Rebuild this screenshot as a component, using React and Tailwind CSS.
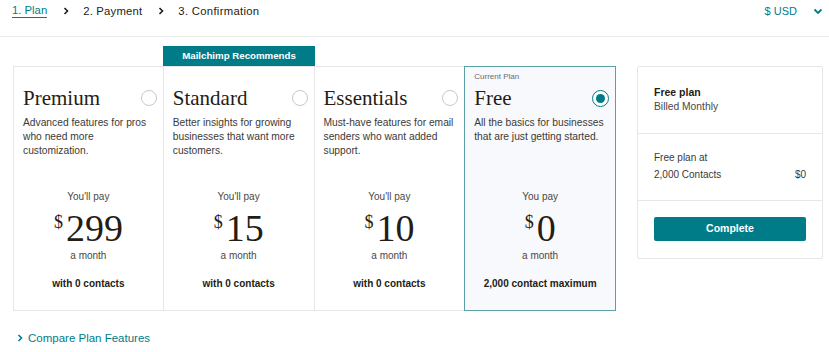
import React from "react";

const sans = { fontFamily: '"Liberation Sans", Arial, sans-serif' };
const serif = { fontFamily: '"Liberation Serif", "Times New Roman", serif' };

function Chevron({ className = "", color = "#241c15" }) {
  return (
    <svg width="6" height="8" viewBox="0 0 6 8" className={className}>
      <path d="M1.5 1 L4.5 4 L1.5 7" fill="none" stroke={color} strokeWidth="1.6" />
    </svg>
  );
}

function Radio({ selected }) {
  if (selected) {
    return (
      <div className="w-[17px] h-[17px] rounded-full border-[1.5px] border-[#007c89] bg-white flex items-center justify-center shrink-0">
        <div className="w-[9px] h-[9px] rounded-full bg-[#007c89]" />
      </div>
    );
  }
  return <div className="w-[16px] h-[16px] rounded-full border border-[#c8c8c8] bg-white shrink-0" />;
}

const plans = [
  {
    name: "Premium",
    desc: "Advanced features for pros who need more customization.",
    pay: "You'll pay",
    price: "299",
    contacts: "with 0 contacts",
  },
  {
    name: "Standard",
    desc: "Better insights for growing businesses that want more customers.",
    pay: "You'll pay",
    price: "15",
    contacts: "with 0 contacts",
  },
  {
    name: "Essentials",
    desc: "Must-have features for email senders who want added support.",
    pay: "You'll pay",
    price: "10",
    contacts: "with 0 contacts",
  },
  {
    name: "Free",
    desc: "All the basics for businesses that are just getting started.",
    pay: "You pay",
    price: "0",
    contacts: "2,000 contact maximum",
    current: true,
  },
];

function PlanCard({ plan, first }) {
  const base = plan.current
    ? "relative -ml-px border border-[#5b9fa7] bg-[#f8f9fd]"
    : "border-y border-r border-[#e6e6e6] bg-white" + (first ? " border-l" : "");
  return (
    <div className={"flex flex-col h-[245px] " + base}>
      <div className="h-[123px] pl-[9px] pr-[6px] pt-[5px] flex flex-col">
        <div className="h-[10px] text-[8px] leading-[10px] text-[#6b6b6b]" style={sans}>
          {plan.current ? "Current Plan" : ""}
        </div>
        <div className="mt-[4px] h-[24px] flex items-center justify-between">
          <span className="text-[21px] leading-[24px] text-[#241c15]" style={serif}>
            {plan.name}
          </span>
          <Radio selected={plan.current} />
        </div>
        <div className="mt-[6px] text-[10.25px] leading-[14px] text-[#3b3937] pr-[2px]" style={sans}>
          {plan.desc}
        </div>
      </div>
      <div className="flex flex-col items-center" style={sans}>
        <div className="text-[10px] leading-[14px] text-[#4a4745]">{plan.pay}</div>
        <div className="mt-[4px] h-[40px] flex items-start justify-center" style={serif}>
          <span className="mt-[4px] text-[18px] leading-[20px] text-[#241c15]">$</span>
          <span className="ml-[3px] text-[38px] leading-[40px] text-[#241c15]">{plan.price}</span>
        </div>
        <div className="mt-[1px] text-[10px] leading-[14px] text-[#4a4745]">a month</div>
        <div className="mt-[14px] text-[10px] leading-[14px] font-bold text-[#241c15]">
          {plan.contacts}
        </div>
      </div>
    </div>
  );
}

export default function App() {
  return (
    <div className="w-[829px] h-[352px] bg-white overflow-hidden text-[#241c15]" style={sans}>
      {/* Header */}
      <div className="h-[37px] border-b border-[#ebebeb] flex items-start justify-between pt-[4px] pl-[12px] pr-[6px]">
        <div className="flex items-center h-[14px] text-[11.3px] leading-[14px]">
          <span className="text-[#007c89] border-b border-[#007c89] leading-[13px]">1. Plan</span>
          <Chevron className="ml-[16px] mr-[14px]" />
          <span className="tracking-[0.2px]">2. Payment</span>
          <Chevron className="ml-[16px] mr-[14px]" />
          <span className="tracking-[0.3px]">3. Confirmation</span>
        </div>
        <div className="flex items-center h-[14px] text-[11px] leading-[14px] text-[#007c89]">
          <span>$ USD</span>
          <svg width="10" height="7" viewBox="0 0 10 7" className="ml-[16px]">
            <path d="M1.5 1.5 L5 5 L8.5 1.5" fill="none" stroke="#007c89" strokeWidth="1.8" />
          </svg>
        </div>
      </div>

      {/* Main */}
      <div className="flex items-start pl-[13px] pt-[9px]">
        <div className="w-[603px] flex flex-col">
          <div className="ml-[150px] w-[152px] h-[20px] bg-[#007c89] text-white text-[9.7px] font-bold flex items-center justify-center">
            Mailchimp Recommends
          </div>
          <div className="grid grid-cols-4">
            {plans.map((p, i) => (
              <PlanCard key={p.name} plan={p} first={i === 0} />
            ))}
          </div>
          <div className="mt-[20px] pl-[4px] flex items-center h-[14px] text-[11.5px] leading-[14px] text-[#007c89]">
            <Chevron color="#007c89" />
            <span className="ml-[5px]">Compare Plan Features</span>
          </div>
        </div>

        <div className="ml-[21px] mt-[20px] w-[186px] border border-[#e6e6e6] rounded-[2px] flex flex-col">
          <div className="h-[67px] border-b border-[#e6e6e6] px-[16px] pt-[18px]">
            <div className="text-[10.5px] leading-[14px] font-bold text-[#241c15]">Free plan</div>
            <div className="mt-[1px] text-[10.3px] leading-[14px] text-[#4a4745]">Billed Monthly</div>
          </div>
          <div className="h-[67px] border-b border-[#e6e6e6] px-[16px] pt-[17px]">
            <div className="text-[10px] leading-[14px] text-[#3b3937]">Free plan at</div>
            <div className="mt-[3px] flex justify-between text-[10px] leading-[14px] text-[#3b3937]">
              <span>2,000 Contacts</span>
              <span>$0</span>
            </div>
          </div>
          <div className="px-[16px] pt-[16px] pb-[17px]">
            <div className="h-[24px] rounded-[2px] bg-[#007c89] text-white text-[10.5px] font-bold flex items-center justify-center">
              Complete
            </div>
          </div>
        </div>
      </div>
    </div>
  );
}
